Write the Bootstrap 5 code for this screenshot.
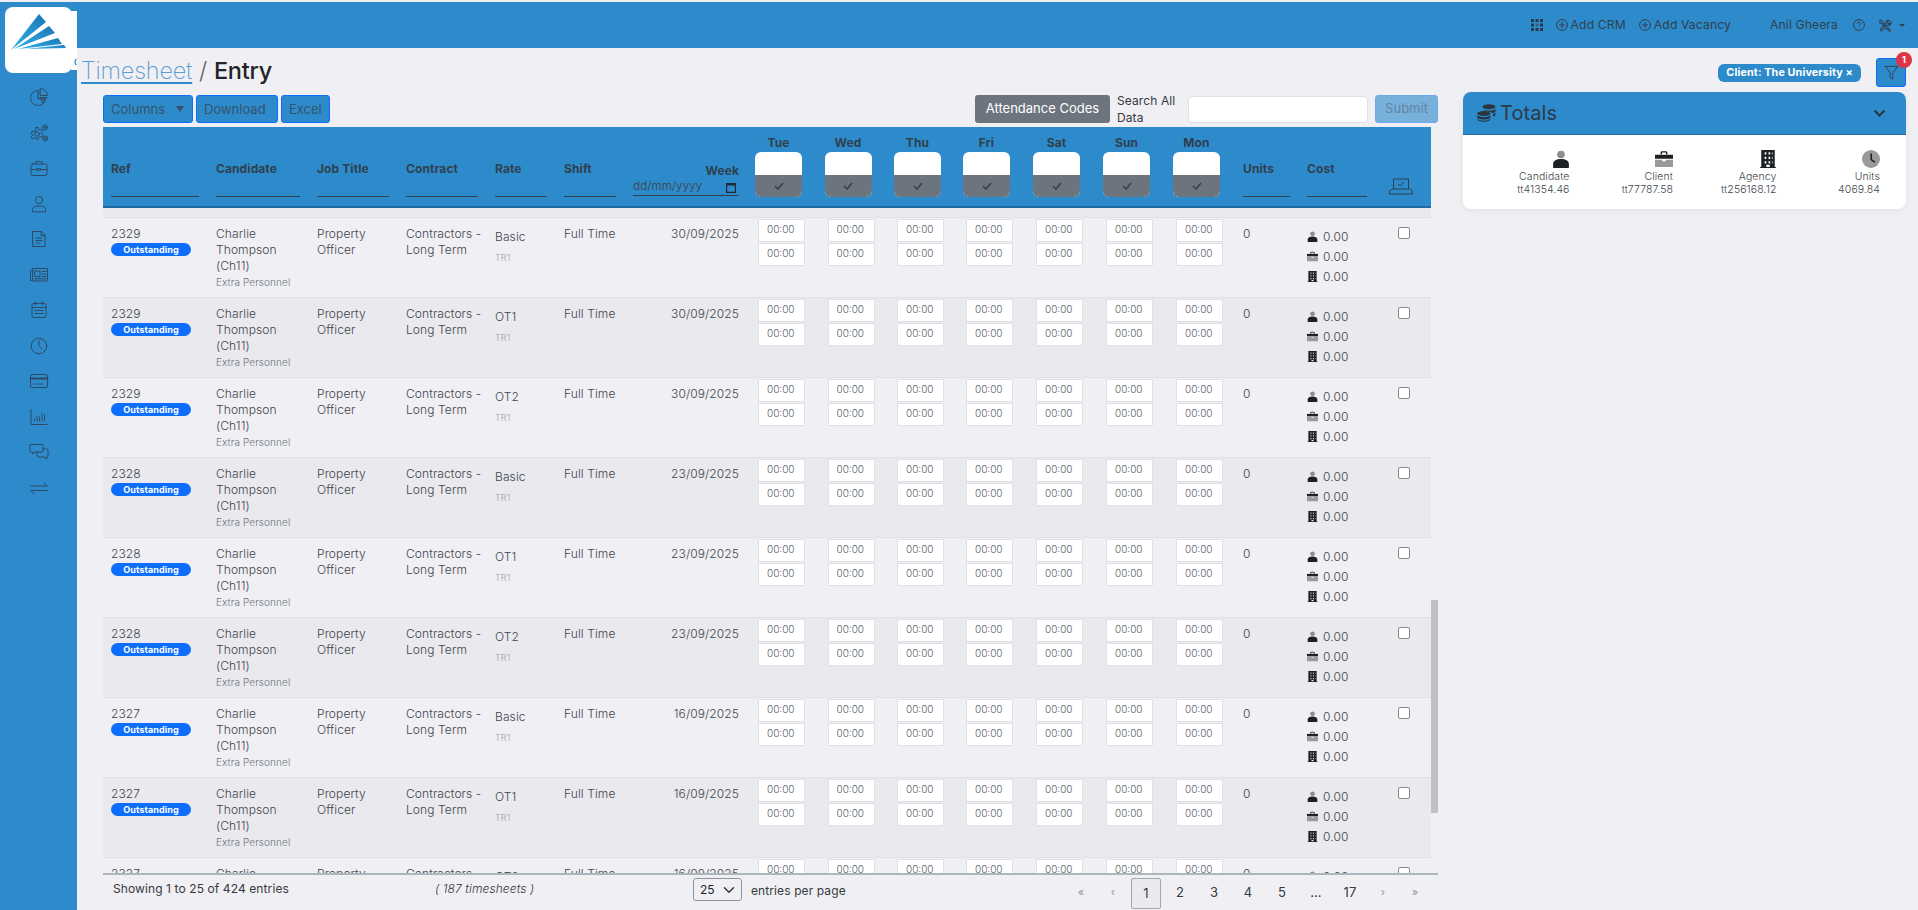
<!DOCTYPE html>
<html lang="en">
<head>
<meta charset="utf-8">
<title>Timesheet Entry</title>
<link href="https://cdn.jsdelivr.net/npm/bootstrap@5.3.0/dist/css/bootstrap.min.css" rel="stylesheet">
<style>
:root{--brand:#2e8bcb;--page:#f0eff4;--ink:#2f3f4d;}
html,body{height:910px;overflow:hidden;}
body{background:var(--page);font-family:Inter,"Noto Sans",sans-serif;font-size:12px;color:#343a40;padding-top:2px;letter-spacing:.1px;}
.top-bar{height:46px;background:var(--brand);padding:0 13px 0 0;color:var(--ink);font-size:12.2px;}
.top-bar svg{display:block;}
.top-link{display:flex;align-items:center;gap:3px;color:var(--ink);text-decoration:none;}
.top-gap{margin-right:13px;}
.user-name{margin-left:39px;}
.help-link{margin-left:15px;}
.tools-link{margin-left:14px;}
.shell{height:862px;}
.side-rail{width:77px;background:var(--brand);padding-top:39px;flex:none;}
.side-rail svg{width:20px;height:20px;display:block;margin:0 auto 15.5px;fill:none;stroke:#2c4a66;stroke-width:1;stroke-linecap:round;stroke-linejoin:round;}
.logo-box{position:absolute;left:5px;top:7px;width:67px;height:66px;background:#fff;border-radius:8px;z-index:5;}
.logo-box::after{content:"";position:absolute;left:66px;top:4px;width:6px;height:59px;background:#fff;}
.logo-box svg{display:block;position:relative;z-index:1;}
.work{min-width:0;}
.title-row{height:44px;padding:0 12px 0 4px;}
.page-title{font-size:23.5px;line-height:30px;margin:8px 0 0;font-weight:300;color:#5b6670;}
.page-title a{color:#5a9bd0;text-decoration-color:var(--brand);text-decoration-thickness:2px;text-underline-offset:3px;font-weight:200;letter-spacing:-.2px;}
.page-title b{font-weight:500;color:#212529;letter-spacing:-.2px;}
.filter-pill{background:var(--brand);color:#fff;font-weight:700;font-size:10.8px;border-radius:6px;padding:3px 8px;height:18px;line-height:12px;margin-right:15px;}
.filter-btn{width:30px;height:29px;background:var(--brand);border:1px solid #0d6efd;border-radius:3px;padding:0;margin-top:-2px;}
.filter-btn svg{margin:auto;display:block;}
.red-dot{font-size:9px;font-weight:700;background:#dc3545;color:#fff;width:16px;height:16px;border-radius:50%;display:flex;align-items:center;justify-content:center;top:-7px;right:-7px;}
.left-col{width:1335px;margin-left:26px;padding-top:3px;flex:none;}
.right-col{width:443px;margin-left:25px;flex:none;}
.tool-row{height:28px;margin-bottom:4px;}
.tool-set{gap:3px;}
.tool-btn{height:28px;background:var(--brand);border:1px solid #0d6efd;border-radius:3px;color:#35536c;font-size:13px;padding:0 7px;line-height:26px;text-align:left;}
.tool-btn.caret-btn{width:90px;position:relative;}
.tool-btn.wide-btn{width:82px;}
.tool-btn.small-btn{width:49px;}
.caret-mark{position:absolute;right:8px;top:10px;width:0;height:0;border:4px solid transparent;border-top:6px solid #35536c;border-bottom:0;}
.caret-mark.caret-inline{position:static;margin-left:4px;border-top-color:#2f3f4d;border-width:3.5px 3px 0;}
.code-btn{height:28px;width:135px;background:#6c757d;color:#fff;border:0;border-radius:3px;font-size:13px;padding:0;}
.search-label{width:58px;line-height:17px;font-size:12px;margin:0 13px 0 7px;white-space:nowrap;}
.search-box{width:180px;height:27px;border:1px solid #dee2e6;border-radius:4px;background:#fff;margin-right:7px;}
.submit-btn{width:63px;height:28px;background:#78b0dc;border:1px solid #6ea8ee;border-radius:3px;color:#66849c;font-size:13px;padding:0;}
.grid-frame{height:746px;}
.grid-view{width:1328px;flex:none;overflow:hidden;}
.grid-track{width:7px;background:#f1f1f1;flex:none;}
.grid-thumb{width:7px;height:213px;margin-top:473px;background:#c1c1c1;}
.sheet{table-layout:fixed;width:1328px;margin:0;--bs-table-bg:transparent;--bs-table-color:#3d454d;border-color:#dee2e6;}
.sheet thead tr.head-line th{background:var(--brand);height:80px;border-bottom:2px solid #1f6a9f;padding:0 9px 0 8px;vertical-align:top;font-size:12px;color:var(--ink);font-weight:700;position:relative;}
.sheet thead tr.gap-line th{height:10px;padding:0;background:#e9e9ee;border-bottom:1px solid #dee2e6;}
.head-name{display:block;margin-top:35px;line-height:14px;height:14px;}
.head-under{display:block;height:1px;background:#2f3f4d;margin-top:20px;}
.week-cell{display:flex;flex-direction:column;}
.week-cell .head-name{margin-top:37px;text-align:right;}
.week-date{display:flex;justify-content:space-between;align-items:center;border-bottom:1px solid #2f3f4d;height:17px;margin-top:1px;font-weight:400;font-size:11.5px;padding-right:3px;color:#3a4d5c;}
.sheet thead tr.head-line th.week-head{padding-right:11px;}
.sheet thead tr.head-line th.day-head{padding:9px 0 0 5px;text-align:center;}
.day-name{display:block;width:47px;line-height:14px;height:16px;}
.day-box{display:block;width:47px;height:45px;border-radius:6px;overflow:hidden;background:#fff;}
.day-tick{display:flex;align-items:center;justify-content:center;height:22px;margin-top:23px;background:#6c757d;}
.sheet thead tr.head-line th.units-head{padding-left:5px;}
.check-head svg{display:block;margin:51px 0 0 5px;}
.sheet tbody td{padding:8px 9px 7px 8px;line-height:16px;font-size:12px;vertical-align:top;border-bottom:1px solid #dee2e6;font-weight:300;height:80px;}
.sheet tbody td.week-text{padding-right:11px;text-align:right;}
.sheet tbody tr:nth-child(even) td{background:#e9e9ee;}
.state-pill{display:block;background:#0d6efd;color:#fff;font-weight:700;font-size:9px;line-height:13px;height:13px;border-radius:7px;text-align:center;width:80px;margin-top:1px;}
.agency-name{display:block;font-size:10px;color:#6c757d;line-height:16px;}
.contract-text{white-space:nowrap;}
.rate-name{display:block;margin-top:3px;}
.rate-code{display:block;margin-top:5px;font-size:9px;color:#9aa1a8;}
.sheet tbody td.day-cell{padding:1px 0 0 8px;}
.time-box{display:block;width:47px;height:23px;border:1px solid #dee2e6;background:#fff;border-radius:0;font-size:10px;font-weight:300;color:#5c646c;padding:0 0 2px 8px;margin-bottom:1px;outline:0;}
.sheet tbody td.units-cell{padding-left:5px;}
.cost-line{display:flex;align-items:center;gap:5px;height:20px;line-height:20px;}
.cost-wrap{margin-top:1px;}
.sheet tbody td.tick-cell{padding:8px 0 0 22px;}
.tick-cell input.form-check-input{width:12px;height:12px;margin:1px 0 0;display:block;border:1px solid #8a8a8a;border-radius:2px;}
.foot-row{height:36px;border-top:2px solid #adb5bd;}
.foot-count{width:332px;padding:5px 0 0 10px;}
.foot-sheets{width:258px;padding-top:5px;font-style:italic;font-weight:300;}
.foot-size{padding-top:3px;}
.foot-size select{width:49px;height:23px;font-size:12px;padding:0 0 0 6px;border:1px solid #8f959b;border-radius:3px;background-color:transparent;background-position:right 4px center;margin-right:9px;}
.foot-size label{margin-top:4px;}
.page-strip{margin:3px 7px 0 auto;list-style:none;padding:0;}
.page-strip a{display:block;width:34px;height:31px;line-height:28px;text-align:center;text-decoration:none;color:#343a40;font-size:13px;}
.page-strip a.muted{color:#8f98a0;font-size:11px;width:32px;}
.page-strip a.now{width:30px;margin:0 2px;border:1px solid #a3a8ad;background:#e9e9ee;border-radius:2px;}
.totals{background:#fff;border:0;border-radius:8px;box-shadow:0 2px 6px rgba(0,0,0,.06);overflow:hidden;height:117px;}
.totals-head{height:43px;background:var(--brand);border-bottom:1px solid #1f6a9f;padding:0 20px 0 14px;color:var(--ink);}
.totals-head h5{font-size:20px;line-height:24px;font-weight:400;margin:0;color:#2c3a46;}
.totals-body{padding:15px 0 0 3px;}
.sum-item{width:103.5px;text-align:right;font-size:10.5px;line-height:13px;font-weight:300;color:#3d454d;}
.sum-item svg{display:block;margin:0 0 2px auto;}
.icon-sprite{position:absolute;width:0;height:0;}
</style>
</head>
<body>
<svg class="icon-sprite" aria-hidden="true">
<symbol id="duo-person" viewBox="0 0 16 16"><circle cx="8" cy="4" r="3.4" fill="#8d8d8d"/><path d="M1 16v-3.5C1 9.500 4 8 8 8s7 1.500 7 4.500V16z" fill="#1d2024"/></symbol>
<symbol id="duo-case" viewBox="0 0 16 16"><path d="M5 4V2.200C5 1.500 5.500 1 6.200 1h3.600c.7 0 1.200.5 1.200 1.200V4H9.800V2.300H6.200V4z" fill="#1d2024"/><path d="M0 4.200h16v3.600H0z" fill="#1d2024"/><path d="M0 8.600h6.500v1.500h3V8.600H16V15H0z" fill="#9a9a9a"/></symbol>
<symbol id="duo-tower" viewBox="0 0 16 16"><path fill-rule="evenodd" d="M2 0h12v15h1v1H1v-1h1zm3 2v2h1.500V2zm3.500 0v2H10V2zM12 2h-.5v2H12zM5 6v2h1.500V6zm3.500 0v2H10V6zm3 0v2h.5V6zM5 10v2h1.500v-2zm3.500 0v2H10v-2zm3 0v2h.5v-2zM6.500 13v2H9.500v-2z" fill="#1d2024"/></symbol>
<symbol id="duo-clock" viewBox="0 0 16 16"><circle cx="8" cy="8" r="8" fill="#9a9a9a"/><path d="M7.500 3h1.400v5.200l3 2-.8 1.100-3.600-2.400z" fill="#1d2024"/></symbol>
</svg>

<div class="logo-box">
<svg width="72" height="66" viewBox="0 0 72 66"><defs><linearGradient id="fan" x1="0" y1="1" x2="1" y2="0"><stop offset="0" stop-color="#2fb6ea"/><stop offset="1" stop-color="#1d74b8"/></linearGradient></defs>
<polygon points="6,43 34,7 41,15" fill="url(#fan)"/><polygon points="9,42 44,19 50,26" fill="url(#fan)"/><polygon points="13,42 53,31 57,37" fill="url(#fan)"/><polygon points="20,42 59,38 61,41" fill="url(#fan)"/>
<path d="M71.500 52a3.800 3.800 0 0 0 0 6" fill="none" stroke="#2e8bcb" stroke-width="1.300"/></svg>
</div>

<nav class="navbar top-bar d-flex justify-content-end align-items-center flex-nowrap">
<a class="top-link top-gap" href="#" aria-label="Apps"><svg width="12" height="12" viewBox="0 0 12 12" fill="#25394b"><path d="M0 0h3v3H0zM4.500 0h3v3h-3zM9 0h3v3H9zM0 4.500h3v3H0zM9 4.500h3v3H9zM0 9h3v3H0zM4.500 9h3v3h-3zM9 9h3v3H9z"/><path d="M4.500 4.500h3v3h-3z" opacity=".5"/></svg></a>
<a class="top-link top-gap" href="#"><svg width="12" height="12" viewBox="0 0 12 12" fill="none" stroke="#2f3f4d"><circle cx="6" cy="6" r="5.400"/><path d="M6 3v6M3 6h6"/></svg>Add CRM</a>
<a class="top-link" href="#"><svg width="12" height="12" viewBox="0 0 12 12" fill="none" stroke="#2f3f4d"><circle cx="6" cy="6" r="5.400"/><path d="M6 3v6M3 6h6"/></svg>Add Vacancy</a>
<span class="top-link user-name">Anil Gheera</span>
<a class="top-link help-link" href="#" aria-label="Help"><svg width="12" height="12" viewBox="0 0 12 12" fill="none" stroke="#2f3f4d"><circle cx="6" cy="6" r="5.400"/><path d="M4.300 4.700C4.300 2.500 7.800 2.700 7.800 4.700 7.800 6 6 5.900 6 7.300M6 8.500v.8"/></svg></a>
<a class="top-link tools-link" href="#" aria-label="Tools"><svg width="13" height="13" viewBox="0 0 13 13" fill="none" stroke="#2f3f4d" stroke-width="1.100"><path d="M1 1l2 .6.6 1.700 7.900 7.900-1.100 1.100-7.900-7.900L.8 3.800zM12 3.200 10 5.100 8.300 3.500 10 1.500C8.300.7 6.500 2 7 4.200L1.200 10.500l1.300 1.400L8.600 6C11 6.500 12.500 5 12 3.200z"/></svg><span class="caret-mark caret-inline"></span></a>
</nav>

<div class="shell d-flex">
<aside class="side-rail">
<svg viewBox="0 0 20 20"><path d="M9 3.500A7.500 7.500 0 1 0 16.500 12H9z"/><path d="M11.500 1.500a7 7 0 0 1 7 7h-7z"/><path d="M11 10.500h7l-4 5z"/><path d="M15.500 10.500l-2.500 3"/></svg>
<svg viewBox="0 0 20 20"><circle cx="8" cy="11" r="2.200"/><path d="M7 4.500h2l.4 1.800 1.600.8 1.700-.8 1.200 1.600-1.200 1.400v1.800l1.400 1.300-1.200 1.800-1.800-.7-1.600.9-.4 1.800H7l-.4-1.800L5 15.300l-1.800.7L2 14.200l1.400-1.300v-1.800L2 9.900l1.200-1.800 1.800.8 1.600-.8z"/><circle cx="16" cy="4.500" r="2.500"/><circle cx="16" cy="4.500" r=".9"/><circle cx="16.200" cy="15.500" r="2.500"/><circle cx="16.200" cy="15.500" r=".9"/></svg>
<svg viewBox="0 0 20 20"><rect x="2" y="6" width="16" height="11.500" rx="1.500"/><path d="M7 6V3.500h6V6M2 11.500h6M12 11.500h6"/><rect x="8.500" y="10.500" width="3" height="2"/></svg>
<svg viewBox="0 0 20 20"><circle cx="10" cy="6" r="3.500"/><path d="M3.500 17.500v-2c0-2.500 2-3.500 6.500-3.500s6.500 1 6.500 3.500v2z"/></svg>
<svg viewBox="0 0 20 20"><path d="M4 2.500h8.500L16 6v11.500H4z"/><path d="M12 2.500V6.500h4M7 9h6M7 11.500h6M7 14h4"/></svg>
<svg viewBox="0 0 20 20"><path d="M4 5H1.500v10.500H4M4 3.500h14.500v12.500H4z"/><rect x="6" y="6" width="5" height="5.500"/><path d="M13 6.500h4M13 9h4M13 11.500h4M6 13.800h11"/></svg>
<svg viewBox="0 0 20 20"><rect x="3" y="3.500" width="14" height="14" rx="1.500"/><path d="M3 7.500h14M6.500 1.800v3M13.500 1.800v3M6 10.500h2M9 10.500h2M12 10.500h2M6 13.500h2M9 13.500h2M12 13.500h2" stroke-width="1.200"/></svg>
<svg viewBox="0 0 20 20"><circle cx="10" cy="10" r="7.800"/><path d="M10 4.500V10l3 2.500"/></svg>
<svg viewBox="0 0 20 20"><rect x="1.500" y="3.500" width="17" height="13" rx="1.500"/><path d="M1.500 7.500h17" stroke-width="2.200"/><path d="M5 13h3M9.500 13h4"/></svg>
<svg viewBox="0 0 20 20"><path d="M2 2.500v15h16M5.500 14v-2M8 14V9M10.500 14v-4M13 14V6.500M15.500 14V8"/></svg>
<svg viewBox="0 0 20 20"><path d="M2 2.500h11a1 1 0 0 1 1 1v5.500a1 1 0 0 1-1 1H6l-2.500 2v-2H2a1 1 0 0 1-1-1V3.500a1 1 0 0 1 1-1z"/><path d="M14 7h4a1 1 0 0 1 1 1v6a1 1 0 0 1-1 1h-.5v2L15 15H9a1 1 0 0 1-1-1v-3.800"/></svg>
<svg viewBox="0 0 20 20"><path d="M2 8h16M14.500 4.500 18 8M2 12.500h16M5.500 16 2 12.500"/></svg>
</aside>

<main class="work flex-grow-1">
<div class="title-row d-flex justify-content-between">
<h1 class="page-title"><a href="#">Timesheet</a> / <b>Entry</b></h1>
<div class="d-flex align-items-start pt-2 mt-1">
<span class="filter-pill mt-1">Client: The University ×</span>
<button class="filter-btn position-relative" aria-label="Filter"><svg width="15" height="15" viewBox="0 0 16 16" fill="none" stroke="#2f3f4d"><path d="M1 1.500h14l-5.500 6.500v7l-3-1.500V8z"/></svg><span class="red-dot position-absolute">1</span></button>
</div>
</div>

<div class="d-flex">
<section class="left-col">
<div class="tool-row d-flex align-items-center">
<div class="d-flex tool-set me-auto">
<button class="tool-btn caret-btn">Columns<span class="caret-mark"></span></button>
<button class="tool-btn wide-btn">Download</button>
<button class="tool-btn small-btn">Excel</button>
</div>
<button class="code-btn">Attendance Codes</button>
<span class="search-label">Search All<br>Data</span>
<input class="search-box" type="text" aria-label="Search">
<button class="submit-btn">Submit</button>
</div>

<div class="grid-frame d-flex">
<div class="grid-view">
<table class="table sheet">
<colgroup><col style="width:105px"><col style="width:101px"><col style="width:89px"><col style="width:89px"><col style="width:69px"><col style="width:69px"><col style="width:125px"><col style="width:69.5px"><col style="width:69.5px"><col style="width:69px"><col style="width:70px"><col style="width:70px"><col style="width:70px"><col style="width:70px"><col style="width:61px"><col style="width:77px"><col></colgroup>
<thead id="sheetHead"></thead>
<tbody id="sheetBody"></tbody>
</table>
</div>
<div class="grid-track"><div class="grid-thumb"></div></div>
</div>

<div class="foot-row d-flex">
<div class="foot-count">Showing 1 to 25 of 424 entries</div>
<div class="foot-sheets">( 187 timesheets )</div>
<div class="foot-size d-flex align-items-start"><select class="form-select" aria-label="Entries per page"><option>25</option></select><label>entries per page</label></div>
<ul class="page-strip d-flex" id="pager"></ul>
</div>
</section>

<aside class="right-col">
<div class="card totals">
<div class="totals-head d-flex align-items-center">
<svg class="me-1" width="19" height="18" viewBox="0 0 19 18" fill="#2a3540"><ellipse cx="12" cy="2.800" rx="6.500" ry="2.500"/><path d="M7 5.500c1.200.8 3 1.200 5 1.200 2.800 0 5.300-.8 6.500-2v2.200c0 .9-1.100 1.700-2.800 2.200C14.800 8 11 7.300 8 7.400z"/><path d="M17 9.500l1.500-1v2c0 .8-1 1.600-2.500 2v-2.300z"/><ellipse cx="6.800" cy="9.600" rx="6.500" ry="2.500"/><path d="M.3 11.300c1.200 1.200 3.700 2 6.500 2s5.300-.8 6.500-2v2c0 1.300-2.900 2.300-6.500 2.300S.3 14.600.3 13.300z"/><path d="M.3 14.800c1.200 1.200 3.700 2 6.500 2s5.300-.8 6.500-2v.5c0 1.400-2.900 2.500-6.500 2.500S.3 16.700.3 15.300z"/></svg>
<h5>Totals</h5>
<svg class="ms-auto" width="13" height="9" viewBox="0 0 13 9" fill="none" stroke="#2a3540" stroke-width="2"><path d="M1.500 1.500l5 5 5-5"/></svg>
</div>
<div class="totals-body d-flex">
<div class="sum-item"><svg width="18" height="18"><use href="#duo-person"/></svg>Candidate<br>tt41354.46</div>
<div class="sum-item"><svg width="18" height="18"><use href="#duo-case"/></svg>Client<br>tt77787.58</div>
<div class="sum-item"><svg width="18" height="18"><use href="#duo-tower"/></svg>Agency<br>tt256168.12</div>
<div class="sum-item"><svg width="18" height="18"><use href="#duo-clock"/></svg>Units<br>4069.84</div>
</div>
</div>
</aside>
</div>
</main>
</div>

<script src="https://cdn.jsdelivr.net/npm/bootstrap@5.3.0/dist/js/bootstrap.bundle.min.js"></script>
<script>
var days=['Tue','Wed','Thu','Fri','Sat','Sun','Mon'];
var tick='<svg width="10" height="8" viewBox="0 0 10 8" fill="none" stroke="#3a3f44" stroke-width="1.600"><path d="M1 4l3 3 5-6"/></svg>';
function plain(n,cls){return '<th class="'+(cls||'')+'"><span class="head-name">'+n+'</span><span class="head-under"></span></th>';}
var h='<tr class="head-line">'+plain('Ref')+plain('Candidate')+plain('Job Title')+plain('Contract')+plain('Rate')+plain('Shift');
h+='<th class="week-head"><div class="week-cell"><span class="head-name">Week</span><span class="week-date">dd/mm/yyyy<svg width="10" height="11" viewBox="0 0 10 11" fill="#1f2a33"><path d="M0 1h10v10H0zM1.200 3.500v6.300h7.600V3.500z"/></svg></span></div></th>';
days.forEach(function(d){h+='<th class="day-head"><span class="day-name">'+d+'</span><span class="day-box"><span class="day-tick">'+tick+'</span></span></th>';});
h+=plain('Units','units-head')+plain('Cost');
h+='<th class="check-head"><svg width="24" height="17" viewBox="0 0 24 17" fill="none" stroke="#2f3f4d"><path d="M4.500 11V1h15v10M.5 16v-3l3-2h17l3 2v3z"/><path d="M9 6l2 2 4-4"/></svg></th></tr>';
h+='<tr class="gap-line"><th colspan="17"></th></tr>';
document.getElementById('sheetHead').innerHTML=h;
var rows=[[2329,'Basic','30/09/2025'],[2329,'OT1','30/09/2025'],[2329,'OT2','30/09/2025'],[2328,'Basic','23/09/2025'],[2328,'OT1','23/09/2025'],[2328,'OT2','23/09/2025'],[2327,'Basic','16/09/2025'],[2327,'OT1','16/09/2025'],[2327,'OT2','16/09/2025']];
var b='';
rows.forEach(function(r){
 b+='<tr><td>'+r[0]+'<span class="state-pill">Outstanding</span></td>';
 b+='<td>Charlie Thompson (Ch11)<span class="agency-name">Extra Personnel</span></td><td>Property Officer</td><td class="contract-text">Contractors -<br>Long Term</td>';
 b+='<td><span class="rate-name">'+r[1]+'</span><span class="rate-code">TR1</span></td><td>Full Time</td><td class="week-text">'+r[2]+'</td>';
 days.forEach(function(d){b+='<td class="day-cell"><input class="time-box" value="00:00" aria-label="'+d+' start"><input class="time-box" value="00:00" aria-label="'+d+' end"></td>';});
 b+='<td class="units-cell">0</td><td><div class="cost-wrap">';
 ['duo-person','duo-case','duo-tower'].forEach(function(i){b+='<div class="cost-line"><svg width="11" height="11"><use href="#'+i+'"/></svg>0.00</div>';});
 b+='</div></td><td class="tick-cell"><input type="checkbox" class="form-check-input" aria-label="Select"></td></tr>';
});
document.getElementById('sheetBody').innerHTML=b;
var pg=[['«',1],['‹',1],['1',2],['2'],['3'],['4'],['5'],['…'],['17'],['›',1],['»',1]];
document.getElementById('pager').innerHTML=pg.map(function(p){return '<li><a href="#" class="'+(p[1]==1?'muted':p[1]==2?'now':'')+'">'+p[0]+'</a></li>';}).join('');
</script>
</body>
</html>
